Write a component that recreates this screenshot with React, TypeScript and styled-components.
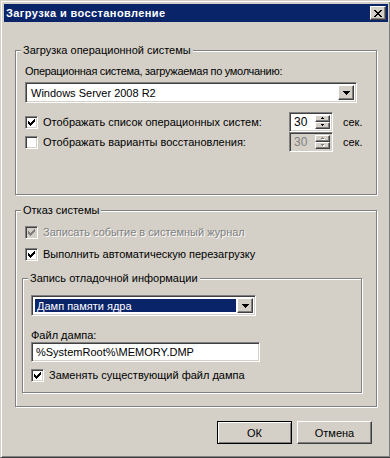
import React from "react";
import styled, { createGlobalStyle, css } from "styled-components";

const Global = createGlobalStyle`
  html, body { margin: 0; padding: 0; background: #ffffff; }
  body { font-family: "Liberation Sans", Arial, sans-serif; font-size: 11px; color: #000; }
  * { box-sizing: border-box; }
`;

const FACE = "#d4d0c8";

const raised = css`
  border: 1px solid;
  border-color: #fff #404040 #404040 #fff;
  box-shadow: inset -1px -1px #808080, inset 1px 1px ${FACE};
`;

const sunken = css`
  border: 1px solid;
  border-color: #808080 #fff #fff #808080;
  box-shadow: inset 1px 1px #404040, inset -1px -1px ${FACE};
`;

const Window = styled.div`
  width: 391px;
  height: 458px;
  background: ${FACE};
  border: 1px solid;
  border-color: ${FACE} #404040 #404040 ${FACE};
  box-shadow: inset 1px 1px #fff, inset -1px -1px #808080;
  padding: 3px 2px 2px 3px;
  display: flex;
  flex-direction: column;
`;

const TitleBar = styled.div`
  height: 18px;
  background: #0a246a;
  display: flex;
  align-items: center;
  justify-content: space-between;
  padding: 0 2px 0 2px;
`;

const Title = styled.div`
  color: #fff;
  font-weight: bold;
  font-size: 11px;
  line-height: 13px;
  letter-spacing: 0.4px;
`;

const CloseBtn = styled.div`
  width: 16px;
  height: 14px;
  background: ${FACE};
  ${raised};
  display: flex;
  align-items: center;
  justify-content: center;
`;

const Body = styled.div`
  flex: 1;
  padding: 28px 0 0 11px;
  display: flex;
  flex-direction: column;
`;

const Group = styled.div<{ $w: number; $h: number; $pl: number; $pt: number; $mt: number }>`
  position: relative;
  width: ${(p) => p.$w}px;
  height: ${(p) => p.$h}px;
  margin-top: ${(p) => p.$mt}px;
  border: 1px solid #808080;
  box-shadow: inset 1px 1px #fff, 1px 1px #fff;
  padding: ${(p) => p.$pt}px 0 0 ${(p) => p.$pl}px;
  display: flex;
  flex-direction: column;
`;

const Legend = styled.div`
  position: absolute;
  top: -7px;
  left: 5px;
  padding: 0 2px;
  background: ${FACE};
  line-height: 13px;
  white-space: nowrap;
`;

const Label = styled.div<{ $mt?: number; $ls?: number }>`
  line-height: 13px;
  margin-top: ${(p) => p.$mt ?? 0}px;
  letter-spacing: ${(p) => p.$ls ?? 0}px;
  white-space: nowrap;
`;

const Combo = styled.div<{ $w: number; $h: number; $mt: number }>`
  width: ${(p) => p.$w}px;
  height: ${(p) => p.$h}px;
  margin-top: ${(p) => p.$mt}px;
  background: #fff;
  ${sunken};
  padding: 2px;
  display: flex;
`;

const ComboText = styled.div<{ $sel?: boolean }>`
  flex: 1;
  display: flex;
  align-items: center;
  padding-left: 2px;
  margin: 1px;
  white-space: nowrap;
  ${(p) =>
    p.$sel &&
    css`
      background: #0a246a;
      color: #fff;
    `}
`;

const DropBtn = styled.div`
  width: 16px;
  background: ${FACE};
  ${raised};
  display: flex;
  align-items: center;
  justify-content: center;
`;

const Row = styled.div<{ $h: number; $mt?: number; $ml?: number }>`
  display: flex;
  align-items: center;
  height: ${(p) => p.$h}px;
  margin-top: ${(p) => p.$mt ?? 0}px;
  margin-left: ${(p) => p.$ml ?? 0}px;
`;

const CheckWrap = styled.div<{ $w?: number }>`
  display: flex;
  align-items: center;
  gap: 5px;
  width: ${(p) => (p.$w ? `${p.$w}px` : "auto")};
`;

const Box = styled.div<{ $dis?: boolean }>`
  width: 13px;
  height: 13px;
  flex: none;
  background: ${(p) => (p.$dis ? FACE : "#fff")};
  ${sunken};
  display: flex;
  align-items: center;
  justify-content: center;
`;

const CheckText = styled.span<{ $dis?: boolean }>`
  line-height: 13px;
  white-space: nowrap;
  ${(p) =>
    p.$dis &&
    css`
      color: #808080;
      text-shadow: 1px 1px #fff;
    `}
`;

const Spin = styled.div<{ $dis?: boolean }>`
  width: 44px;
  height: 20px;
  background: ${(p) => (p.$dis ? FACE : "#fff")};
  color: ${(p) => (p.$dis ? "#808080" : "#000")};
  ${sunken};
  padding: 2px;
  display: flex;
  font-size: 12px;
`;

const SpinText = styled.div`
  flex: 1;
  display: flex;
  align-items: center;
  padding-left: 2px;
`;

const SpinBtns = styled.div`
  width: 15px;
  display: flex;
  flex-direction: column;
`;

const SpinBtn = styled.div`
  flex: 1;
  background: ${FACE};
  ${raised};
  display: flex;
  align-items: center;
  justify-content: center;
`;

const Unit = styled.span`
  margin-left: 10px;
  line-height: 13px;
`;

const Field = styled.div<{ $w: number }>`
  width: ${(p) => p.$w}px;
  height: 20px;
  background: #fff;
  ${sunken};
  padding: 0 0 0 4px;
  display: flex;
  align-items: center;
  white-space: nowrap;
`;

const Buttons = styled.div`
  display: flex;
  gap: 5px;
  margin-top: 14px;
  padding-left: 202px;
`;

const Button = styled.div<{ $def?: boolean }>`
  width: 75px;
  height: 23px;
  background: ${FACE};
  display: flex;
  align-items: center;
  justify-content: center;
  ${(p) =>
    p.$def
      ? css`
          border: 1px solid #000;
          box-shadow: inset 1px 1px #fff, inset -1px -1px #808080;
        `
      : raised}
`;

const Px = styled.svg`
  display: block;
  shape-rendering: crispEdges;
`;

const CHECK =
  "M6 0h1v1h-1z M5 1h2v1h-2z M0 2h1v1h-1z M4 2h3v1h-3z M0 3h2v1h-2z M3 3h3v1h-3z M0 4h5v1h-5z M1 5h3v1h-3z M2 6h1v1h-1z";

const Check = ({ color = "#000" }: { color?: string }) => (
  <Px width="7" height="7" viewBox="0 0 7 7">
    <path d={CHECK} fill={color} />
  </Px>
);

const CloseGlyph = () => (
  <Px width="8" height="7" viewBox="0 0 8 7">
    <path
      d="M0 0h2v1h-2z M6 0h2v1h-2z M1 1h2v1h-2z M5 1h2v1h-2z M2 2h4v1h-4z M3 3h2v1h-2z M2 4h4v1h-4z M1 5h2v1h-2z M5 5h2v1h-2z M0 6h2v1h-2z M6 6h2v1h-2z"
      fill="#000"
    />
  </Px>
);

const DownArrow = () => (
  <Px width="7" height="4" viewBox="0 0 7 4">
    <path d="M0 0h7v1h-7z M1 1h5v1h-5z M2 2h3v1h-3z M3 3h1v1h-1z" fill="#000" />
  </Px>
);

const SmallArrow = ({ up, dis }: { up?: boolean; dis?: boolean }) => (
  <Px width="4" height="3" viewBox="0 0 4 3">
    {dis && (
      <path
        d={up ? "M2 1h1v1h-1z M1 2h3v1h-3z" : "M1 1h3v1h-3z M2 2h1v1h-1z"}
        fill="#fff"
      />
    )}
    <path
      d={up ? "M1 0h1v1h-1z M0 1h3v1h-3z" : "M0 0h3v1h-3z M1 1h1v1h-1z"}
      fill={dis ? "#808080" : "#000"}
    />
  </Px>
);

export default function App() {
  return (
    <>
      <Global />
      <Window>
        <TitleBar>
          <Title>Загрузка и восстановление</Title>
          <CloseBtn>
            <CloseGlyph />
          </CloseBtn>
        </TitleBar>
        <Body>
          <Group $w={362} $h={145} $pl={9} $pt={14} $mt={0}>
            <Legend>Загрузка операционной системы</Legend>
            <Label $ls={-0.3}>Операционная система, загружаемая по умолчанию:</Label>
            <Combo $w={332} $h={21} $mt={4}>
              <ComboText>Windows Server 2008 R2</ComboText>
              <DropBtn>
                <DownArrow />
              </DropBtn>
            </Combo>
            <Row $h={20} $mt={9}>
              <CheckWrap $w={264}>
                <Box>
                  <Check />
                </Box>
                <CheckText>Отображать список операционных систем:</CheckText>
              </CheckWrap>
              <Spin>
                <SpinText>30</SpinText>
                <SpinBtns>
                  <SpinBtn>
                    <SmallArrow up />
                  </SpinBtn>
                  <SpinBtn>
                    <SmallArrow />
                  </SpinBtn>
                </SpinBtns>
              </Spin>
              <Unit>сек.</Unit>
            </Row>
            <Row $h={20}>
              <CheckWrap $w={264}>
                <Box />
                <CheckText>Отображать варианты восстановления:</CheckText>
              </CheckWrap>
              <Spin $dis>
                <SpinText>30</SpinText>
                <SpinBtns>
                  <SpinBtn>
                    <SmallArrow up dis />
                  </SpinBtn>
                  <SpinBtn>
                    <SmallArrow dis />
                  </SpinBtn>
                </SpinBtns>
              </Spin>
              <Unit>сек.</Unit>
            </Row>
          </Group>

          <Group $w={362} $h={197} $pl={6} $pt={11} $mt={15}>
            <Legend>Отказ системы</Legend>
            <Row $h={21} $ml={3}>
              <CheckWrap>
                <Box $dis>
                  <Check color="#808080" />
                </Box>
                <CheckText $dis>Записать событие в системный журнал</CheckText>
              </CheckWrap>
            </Row>
            <Row $h={21} $mt={1} $ml={3}>
              <CheckWrap>
                <Box>
                  <Check />
                </Box>
                <CheckText>Выполнить автоматическую перезагрузку</CheckText>
              </CheckWrap>
            </Row>
            <Group $w={340} $h={115} $pl={8} $pt={16} $mt={13}>
              <Legend>Запись отладочной информации</Legend>
              <Combo $w={225} $h={21} $mt={0}>
                <ComboText $sel>Дамп памяти ядра</ComboText>
                <DropBtn>
                  <DownArrow />
                </DropBtn>
              </Combo>
              <Label $mt={13}>Файл дампа:</Label>
              <Field $w={229}>%SystemRoot%\MEMORY.DMP</Field>
              <Row $h={20} $mt={3}>
                <CheckWrap>
                  <Box>
                    <Check />
                  </Box>
                  <CheckText>Заменять существующий файл дампа</CheckText>
                </CheckWrap>
              </Row>
            </Group>
          </Group>

          <Buttons>
            <Button $def>ОК</Button>
            <Button>Отмена</Button>
          </Buttons>
        </Body>
      </Window>
    </>
  );
}
